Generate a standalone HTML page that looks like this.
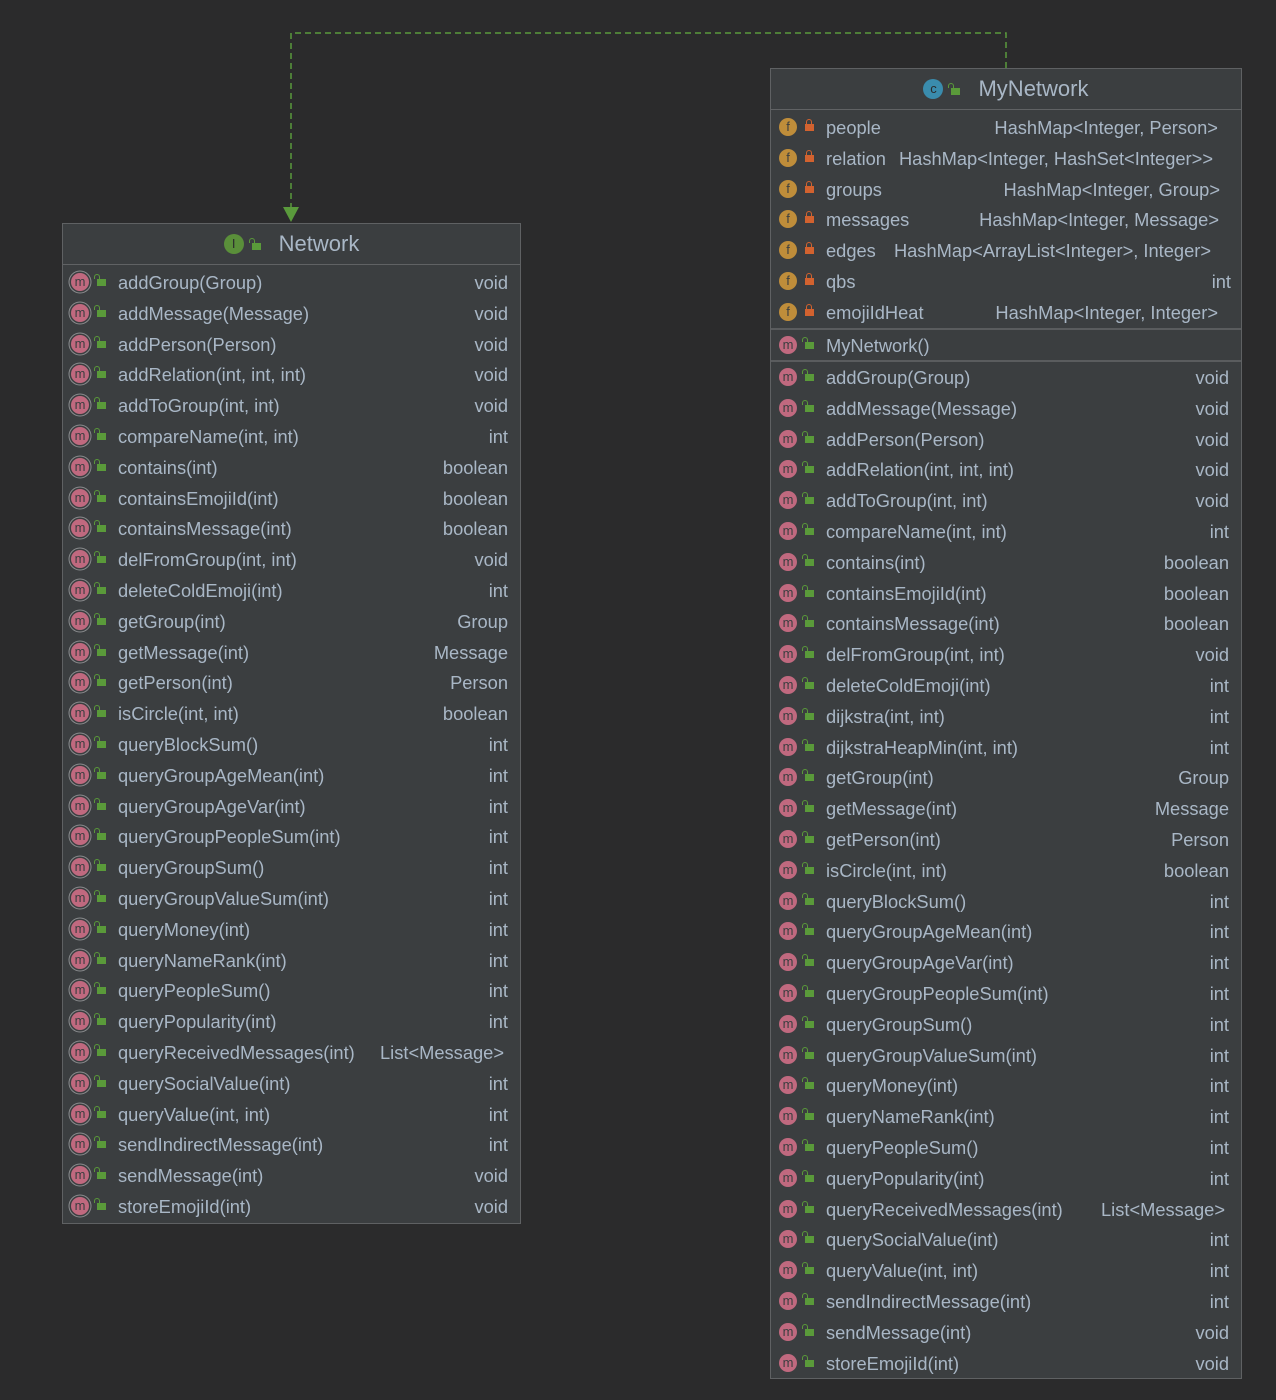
<!DOCTYPE html>
<html><head><meta charset="utf-8"><style>
html,body{margin:0;padding:0;background:#2b2b2c;width:1276px;height:1400px;overflow:hidden;font-family:"Liberation Sans",sans-serif;}
.box{position:absolute;background:#3b3e40;border:1px solid #5f6163;box-sizing:border-box;color:#a9b7c6;}
.hd{position:absolute;left:0;right:0;top:0;height:40px;border-bottom:1px solid #606264;display:flex;align-items:center;justify-content:center;font-size:22px;color:#a9b7c6;}
.r{position:absolute;left:0;right:0;height:30.8px;font-size:18.3px;}
.r span{position:absolute;left:55px;top:5px;white-space:nowrap;}
.r em{position:absolute;right:12px;top:5px;font-style:normal;white-space:nowrap;}
.ic{position:absolute;left:8px;top:6px;width:18px;height:18px;border-radius:50%;background:#c0697f;color:#3b3e40;font-size:13px;line-height:17px;text-align:center;font-weight:normal;font-style:normal;}
.ic.a{box-shadow:0 0 0 1.5px #3b3e40,0 0 0 2.5px #8a8c8e;}
.ic.f{background:#bf8d3a;}
.lk{position:absolute;left:34px;top:12px;width:9px;height:7px;background:#5a9a3a;}
.lk:before{content:"";position:absolute;left:-3px;top:-5px;width:4px;height:4px;border:1.5px solid #5a9a3a;border-bottom:none;border-radius:4px 4px 0 0;}
.lk.p{background:#d2622f;}
.lk.p:before{left:1px;border-color:#d2622f;}
.sep{position:absolute;left:0;right:0;height:0;border-top:2px solid #5a5c5e;}
.hic{width:20px;height:20px;border-radius:50%;color:#2b2b2c;font-size:13px;line-height:20px;text-align:center;margin-right:8px;}
</style></head><body>
<svg style="position:absolute;left:0;top:0" width="1276" height="240">
<path d="M1006 68 V33 H291 V210" fill="none" stroke="#5a9a3c" stroke-width="1.5" stroke-dasharray="6,4"/>
<polygon points="283,207 299,207 291,222" fill="#5a9a3c"/>
</svg>

<div class="box" style="left:62px;top:223px;width:459px;height:1001px;">
<div class="hd"><span class="hic" style="background:#5a8f3a">I</span><span class="lk" style="position:relative;left:0;top:2px;margin-right:18px;display:inline-block"></span>Network</div>
<div style="position:absolute;top:43px;left:0;right:0">
<div class="r" style="top:0px"><i class="ic a">m</i><b class="lk"></b><span>addGroup(Group)</span><em>void</em></div>
<div class="r" style="top:30.8px"><i class="ic a">m</i><b class="lk"></b><span>addMessage(Message)</span><em>void</em></div>
<div class="r" style="top:61.6px"><i class="ic a">m</i><b class="lk"></b><span>addPerson(Person)</span><em>void</em></div>
<div class="r" style="top:92.4px"><i class="ic a">m</i><b class="lk"></b><span>addRelation(int, int, int)</span><em>void</em></div>
<div class="r" style="top:123.2px"><i class="ic a">m</i><b class="lk"></b><span>addToGroup(int, int)</span><em>void</em></div>
<div class="r" style="top:154px"><i class="ic a">m</i><b class="lk"></b><span>compareName(int, int)</span><em>int</em></div>
<div class="r" style="top:184.8px"><i class="ic a">m</i><b class="lk"></b><span>contains(int)</span><em>boolean</em></div>
<div class="r" style="top:215.6px"><i class="ic a">m</i><b class="lk"></b><span>containsEmojiId(int)</span><em>boolean</em></div>
<div class="r" style="top:246.4px"><i class="ic a">m</i><b class="lk"></b><span>containsMessage(int)</span><em>boolean</em></div>
<div class="r" style="top:277.2px"><i class="ic a">m</i><b class="lk"></b><span>delFromGroup(int, int)</span><em>void</em></div>
<div class="r" style="top:308px"><i class="ic a">m</i><b class="lk"></b><span>deleteColdEmoji(int)</span><em>int</em></div>
<div class="r" style="top:338.8px"><i class="ic a">m</i><b class="lk"></b><span>getGroup(int)</span><em>Group</em></div>
<div class="r" style="top:369.6px"><i class="ic a">m</i><b class="lk"></b><span>getMessage(int)</span><em>Message</em></div>
<div class="r" style="top:400.4px"><i class="ic a">m</i><b class="lk"></b><span>getPerson(int)</span><em>Person</em></div>
<div class="r" style="top:431.2px"><i class="ic a">m</i><b class="lk"></b><span>isCircle(int, int)</span><em>boolean</em></div>
<div class="r" style="top:462px"><i class="ic a">m</i><b class="lk"></b><span>queryBlockSum()</span><em>int</em></div>
<div class="r" style="top:492.8px"><i class="ic a">m</i><b class="lk"></b><span>queryGroupAgeMean(int)</span><em>int</em></div>
<div class="r" style="top:523.6px"><i class="ic a">m</i><b class="lk"></b><span>queryGroupAgeVar(int)</span><em>int</em></div>
<div class="r" style="top:554.4px"><i class="ic a">m</i><b class="lk"></b><span>queryGroupPeopleSum(int)</span><em>int</em></div>
<div class="r" style="top:585.2px"><i class="ic a">m</i><b class="lk"></b><span>queryGroupSum()</span><em>int</em></div>
<div class="r" style="top:616px"><i class="ic a">m</i><b class="lk"></b><span>queryGroupValueSum(int)</span><em>int</em></div>
<div class="r" style="top:646.8px"><i class="ic a">m</i><b class="lk"></b><span>queryMoney(int)</span><em>int</em></div>
<div class="r" style="top:677.6px"><i class="ic a">m</i><b class="lk"></b><span>queryNameRank(int)</span><em>int</em></div>
<div class="r" style="top:708.4px"><i class="ic a">m</i><b class="lk"></b><span>queryPeopleSum()</span><em>int</em></div>
<div class="r" style="top:739.2px"><i class="ic a">m</i><b class="lk"></b><span>queryPopularity(int)</span><em>int</em></div>
<div class="r" style="top:770px"><i class="ic a">m</i><b class="lk"></b><span>queryReceivedMessages(int)</span><em style="right:16px">List&lt;Message&gt;</em></div>
<div class="r" style="top:800.8px"><i class="ic a">m</i><b class="lk"></b><span>querySocialValue(int)</span><em>int</em></div>
<div class="r" style="top:831.6px"><i class="ic a">m</i><b class="lk"></b><span>queryValue(int, int)</span><em>int</em></div>
<div class="r" style="top:862.4px"><i class="ic a">m</i><b class="lk"></b><span>sendIndirectMessage(int)</span><em>int</em></div>
<div class="r" style="top:893.2px"><i class="ic a">m</i><b class="lk"></b><span>sendMessage(int)</span><em>void</em></div>
<div class="r" style="top:924px"><i class="ic a">m</i><b class="lk"></b><span>storeEmojiId(int)</span><em>void</em></div>
</div>
</div>

<div class="box" style="left:770px;top:68px;width:472px;height:1311px;">
<div class="hd"><span class="hic" style="background:#3a8cad">c</span><span class="lk" style="position:relative;left:0;top:2px;margin-right:18px;display:inline-block"></span>MyNetwork</div>
<div style="position:absolute;top:43px;left:0;right:0">
<div class="r" style="top:0px"><i class="ic f">f</i><b class="lk p"></b><span>people</span><em style="right:23px">HashMap&lt;Integer, Person&gt;</em></div>
<div class="r" style="top:30.8px"><i class="ic f">f</i><b class="lk p"></b><span>relation</span><em style="right:28px">HashMap&lt;Integer, HashSet&lt;Integer&gt;&gt;</em></div>
<div class="r" style="top:61.6px"><i class="ic f">f</i><b class="lk p"></b><span>groups</span><em style="right:21px">HashMap&lt;Integer, Group&gt;</em></div>
<div class="r" style="top:92.4px"><i class="ic f">f</i><b class="lk p"></b><span>messages</span><em style="right:22px">HashMap&lt;Integer, Message&gt;</em></div>
<div class="r" style="top:123.2px"><i class="ic f">f</i><b class="lk p"></b><span>edges</span><em style="right:30px">HashMap&lt;ArrayList&lt;Integer&gt;, Integer&gt;</em></div>
<div class="r" style="top:154px"><i class="ic f">f</i><b class="lk p"></b><span>qbs</span><em style="right:10px">int</em></div>
<div class="r" style="top:184.8px"><i class="ic f">f</i><b class="lk p"></b><span>emojiIdHeat</span><em style="right:23px">HashMap&lt;Integer, Integer&gt;</em></div>
<div class="sep" style="top:216px"></div>
<div class="r" style="top:218px"><i class="ic">m</i><b class="lk"></b><span>MyNetwork()</span></div>
<div class="sep" style="top:248px"></div>
<div style="position:absolute;top:250px;left:0;right:0">
<div class="r" style="top:0px"><i class="ic">m</i><b class="lk"></b><span>addGroup(Group)</span><em>void</em></div>
<div class="r" style="top:30.8px"><i class="ic">m</i><b class="lk"></b><span>addMessage(Message)</span><em>void</em></div>
<div class="r" style="top:61.6px"><i class="ic">m</i><b class="lk"></b><span>addPerson(Person)</span><em>void</em></div>
<div class="r" style="top:92.4px"><i class="ic">m</i><b class="lk"></b><span>addRelation(int, int, int)</span><em>void</em></div>
<div class="r" style="top:123.2px"><i class="ic">m</i><b class="lk"></b><span>addToGroup(int, int)</span><em>void</em></div>
<div class="r" style="top:154px"><i class="ic">m</i><b class="lk"></b><span>compareName(int, int)</span><em>int</em></div>
<div class="r" style="top:184.8px"><i class="ic">m</i><b class="lk"></b><span>contains(int)</span><em>boolean</em></div>
<div class="r" style="top:215.6px"><i class="ic">m</i><b class="lk"></b><span>containsEmojiId(int)</span><em>boolean</em></div>
<div class="r" style="top:246.4px"><i class="ic">m</i><b class="lk"></b><span>containsMessage(int)</span><em>boolean</em></div>
<div class="r" style="top:277.2px"><i class="ic">m</i><b class="lk"></b><span>delFromGroup(int, int)</span><em>void</em></div>
<div class="r" style="top:308px"><i class="ic">m</i><b class="lk"></b><span>deleteColdEmoji(int)</span><em>int</em></div>
<div class="r" style="top:338.8px"><i class="ic">m</i><b class="lk"></b><span>dijkstra(int, int)</span><em>int</em></div>
<div class="r" style="top:369.6px"><i class="ic">m</i><b class="lk"></b><span>dijkstraHeapMin(int, int)</span><em>int</em></div>
<div class="r" style="top:400.4px"><i class="ic">m</i><b class="lk"></b><span>getGroup(int)</span><em>Group</em></div>
<div class="r" style="top:431.2px"><i class="ic">m</i><b class="lk"></b><span>getMessage(int)</span><em>Message</em></div>
<div class="r" style="top:462px"><i class="ic">m</i><b class="lk"></b><span>getPerson(int)</span><em>Person</em></div>
<div class="r" style="top:492.8px"><i class="ic">m</i><b class="lk"></b><span>isCircle(int, int)</span><em>boolean</em></div>
<div class="r" style="top:523.6px"><i class="ic">m</i><b class="lk"></b><span>queryBlockSum()</span><em>int</em></div>
<div class="r" style="top:554.4px"><i class="ic">m</i><b class="lk"></b><span>queryGroupAgeMean(int)</span><em>int</em></div>
<div class="r" style="top:585.2px"><i class="ic">m</i><b class="lk"></b><span>queryGroupAgeVar(int)</span><em>int</em></div>
<div class="r" style="top:616px"><i class="ic">m</i><b class="lk"></b><span>queryGroupPeopleSum(int)</span><em>int</em></div>
<div class="r" style="top:646.8px"><i class="ic">m</i><b class="lk"></b><span>queryGroupSum()</span><em>int</em></div>
<div class="r" style="top:677.6px"><i class="ic">m</i><b class="lk"></b><span>queryGroupValueSum(int)</span><em>int</em></div>
<div class="r" style="top:708.4px"><i class="ic">m</i><b class="lk"></b><span>queryMoney(int)</span><em>int</em></div>
<div class="r" style="top:739.2px"><i class="ic">m</i><b class="lk"></b><span>queryNameRank(int)</span><em>int</em></div>
<div class="r" style="top:770px"><i class="ic">m</i><b class="lk"></b><span>queryPeopleSum()</span><em>int</em></div>
<div class="r" style="top:800.8px"><i class="ic">m</i><b class="lk"></b><span>queryPopularity(int)</span><em>int</em></div>
<div class="r" style="top:831.6px"><i class="ic">m</i><b class="lk"></b><span>queryReceivedMessages(int)</span><em style="right:16px">List&lt;Message&gt;</em></div>
<div class="r" style="top:862.4px"><i class="ic">m</i><b class="lk"></b><span>querySocialValue(int)</span><em>int</em></div>
<div class="r" style="top:893.2px"><i class="ic">m</i><b class="lk"></b><span>queryValue(int, int)</span><em>int</em></div>
<div class="r" style="top:924px"><i class="ic">m</i><b class="lk"></b><span>sendIndirectMessage(int)</span><em>int</em></div>
<div class="r" style="top:954.8px"><i class="ic">m</i><b class="lk"></b><span>sendMessage(int)</span><em>void</em></div>
<div class="r" style="top:985.6px"><i class="ic">m</i><b class="lk"></b><span>storeEmojiId(int)</span><em>void</em></div>
</div>
</div>
</div>
</body></html>
